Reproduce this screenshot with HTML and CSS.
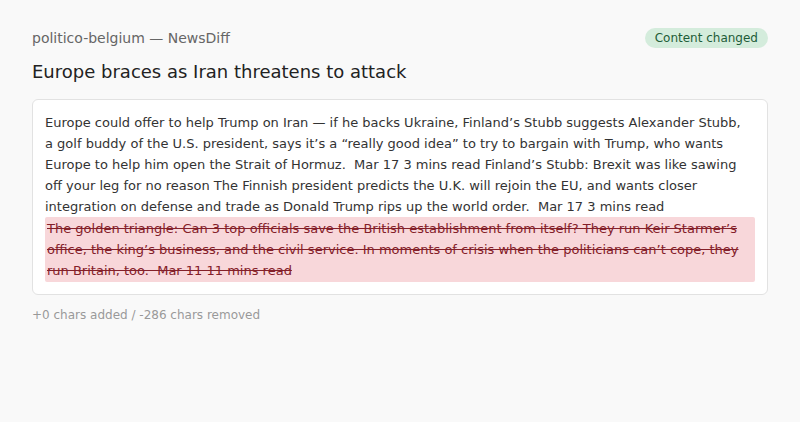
FILE: index.html
```html
<!DOCTYPE html>
<html>
<head>
<meta charset="utf-8">
<link rel="stylesheet" href="styles.css">
</head>
<body>
<div class="page">
  <div class="top">
    <div class="source">politico-belgium — NewsDiff</div>
    <div class="badge">Content changed</div>
  </div>
  <h1 class="title">Europe braces as Iran threatens to attack</h1>
  <div class="card">
    <div class="same">Europe could offer to help Trump on Iran — if he backs Ukraine, Finland’s Stubb suggests Alexander Stubb, a golf buddy of the U.S. president, says it’s a “really good idea” to try to bargain with Trump, who wants Europe to help him open the Strait of Hormuz.&nbsp; Mar 17 3 mins read Finland’s Stubb: Brexit was like sawing off your leg for no reason The Finnish president predicts the U.K. will rejoin the EU, and wants closer integration on defense and trade as Donald Trump rips up the world order.&nbsp; Mar 17 3 mins read</div>
    <del class="removed">The golden triangle: Can 3 top officials save the British establishment from itself? They run Keir Starmer’s office, the king’s business, and the civil service. In moments of crisis when the politicians can’t cope, they run Britain, too.&nbsp; Mar 11 11 mins read</del>
  </div>
  <div class="stats">+0 chars added / -286 chars removed</div>
</div>
</body>
</html>
```

FILE: styles.css
```css
html, body {
  margin: 0;
  padding: 0;
  background: #f9f9f9;
}
body {
  font-family: "DejaVu Sans", sans-serif;
}
.page {
  padding: 28px 32px 0 32px;
}
.top {
  display: flex;
  justify-content: space-between;
  align-items: center;
  height: 20px;
}
.source {
  font-size: 14px;
  color: #666;
}
.badge {
  font-size: 12px;
  color: #1e5c38;
  background: #d4ecdc;
  border-radius: 10px;
  height: 20px;
  line-height: 20px;
  padding: 0 10px;
}
.title {
  margin: 13px 0 16px 0;
  font-size: 18px;
  line-height: 22px;
  font-weight: normal;
  color: #222;
}
.card {
  background: #fff;
  border: 1px solid #e2e2e2;
  border-radius: 6px;
  padding: 12px;
  font-size: 13px;
  line-height: 21px;
  color: #333;
}
.same {
  margin-right: 10px;
}
.removed {
  display: block;
  background: #f8d7da;
  color: #842029;
  text-decoration: line-through;
  padding: 1px 2px;
  border-radius: 2px;
}
.stats {
  margin-top: 12px;
  font-size: 12px;
  line-height: 16px;
  color: #999;
}
```
